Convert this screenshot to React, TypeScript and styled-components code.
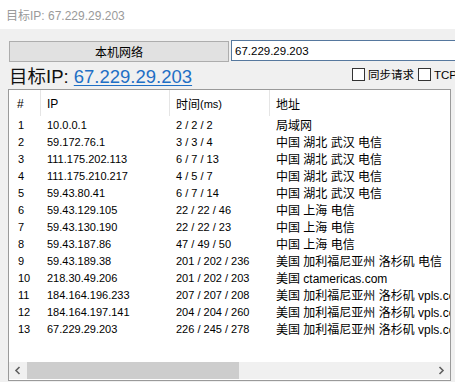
import React from 'react';
import styled, { createGlobalStyle } from 'styled-components';

const GlobalStyle = createGlobalStyle`
  html, body {
    margin: 0;
    padding: 0;
    width: 455px;
    height: 382px;
    overflow: hidden;
    background: #f0f0f0;
    font-family: "Liberation Sans", "Noto Sans CJK SC", sans-serif;
  }
`;

const Window = styled.div`
  width: 455px;
  height: 382px;
  display: flex;
  flex-direction: column;
  overflow: hidden;
`;

const TitleBar = styled.div`
  height: 29px;
  flex: 0 0 29px;
  background: #fff;
  display: flex;
  align-items: center;
  padding-left: 6px;
  padding-bottom: 1px;
  box-sizing: border-box;
  font-size: 12px;
  color: #9a9a9a;
  white-space: nowrap;
`;

const Body = styled.div`
  display: flex;
  flex-direction: column;
  padding: 11px 0 0 8px;
`;

const QueryRow = styled.div`
  display: flex;
  align-items: flex-start;
  height: 22px;
  margin-right: -20px;
`;

const LocalButton = styled.button`
  width: 220px;
  height: 21px;
  margin: 1px 0 0 1px;
  padding: 0;
  background: #e1e1e1;
  border: 1px solid #adadad;
  font-family: "Liberation Sans", "Noto Sans CJK SC", sans-serif;
  font-size: 12px;
  color: #000;
  display: flex;
  align-items: center;
  justify-content: center;
`;

const HostInput = styled.input`
  flex: 1;
  height: 21px;
  margin-left: 2px;
  box-sizing: border-box;
  border: 1px solid #56789e;
  background: #fff;
  padding: 0 3px;
  font-family: "Liberation Sans", sans-serif;
  font-size: 11.5px;
  color: #000;
  outline: none;
`;

const InfoRow = styled.div`
  display: flex;
  align-items: center;
  height: 27px;
  white-space: nowrap;
`;

const Heading = styled.div`
  flex: 0 0 343px;
  padding-left: 1px;
  font-size: 18.5px;
  color: #111;
  line-height: 22px;
  margin-top: 3px;
`;

const TargetLink = styled.a`
  color: #1f6fc5;
  text-decoration: underline;
  text-underline-offset: 2px;
  text-decoration-thickness: 1px;
`;

const Options = styled.div`
  display: flex;
  align-items: center;
  margin-top: -3px;
`;

const Option = styled.label`
  display: flex;
  align-items: center;
  gap: 3px;
  margin-right: 4px;
  font-size: 11.5px;
  color: #000;
`;

const Box = styled.span`
  width: 11px;
  height: 11px;
  border: 1px solid #333;
  background: #fff;
  display: inline-block;
`;

const Table = styled.div`
  width: 443px;
  height: 292px;
  box-sizing: border-box;
  border: 1px solid #9a9a9a;
  background: #fff;
  display: flex;
  flex-direction: column;
  overflow: hidden;
`;

const Grid = styled.div<{ $header?: boolean }>`
  display: grid;
  grid-template-columns: 31px 129px 100px 1fr;
  height: ${(p) => (p.$header ? '26px' : '17px')};
  flex: 0 0 auto;
  white-space: nowrap;
`;

const HeadCell = styled.div<{ $first?: boolean }>`
  display: flex;
  align-items: center;
  padding-left: ${(p) => (p.$first ? '8px' : '6px')};
  padding-top: 1px;
  border-left: ${(p) => (p.$first ? 'none' : '1px solid #e5e5e5')};
  font-size: 12px;
  color: #000;
`;

const Unit = styled.span`
  font-size: 11px;
`;

const Cell = styled.div<{ $first?: boolean; $zh?: boolean }>`
  display: flex;
  align-items: center;
  padding-left: ${(p) => (p.$first ? '9px' : '7px')};
  font-size: ${(p) => (p.$zh ? '12px' : '11px')};
  color: #000;
  overflow: hidden;
`;

const Spacer = styled.div`
  flex: 1;
`;

const HScroll = styled.div`
  height: 17px;
  flex: 0 0 17px;
  margin-bottom: 1px;
  background: #f0f0f0;
  display: flex;
  align-items: stretch;
`;

const ArrowButton = styled.div`
  width: 17px;
  display: flex;
  align-items: center;
  justify-content: center;
`;

const Track = styled.div`
  flex: 1;
  display: flex;
  padding: 0 1px;
`;

const Thumb = styled.div`
  background: #cdcdcd;
  height: 100%;
`;

const hops = [
  ['1', '10.0.0.1', '2 / 2 / 2', '局域网'],
  ['2', '59.172.76.1', '3 / 3 / 4', '中国 湖北 武汉 电信'],
  ['3', '111.175.202.113', '6 / 7 / 13', '中国 湖北 武汉 电信'],
  ['4', '111.175.210.217', '4 / 5 / 7', '中国 湖北 武汉 电信'],
  ['5', '59.43.80.41', '6 / 7 / 14', '中国 湖北 武汉 电信'],
  ['6', '59.43.129.105', '22 / 22 / 46', '中国 上海 电信'],
  ['7', '59.43.130.190', '22 / 22 / 23', '中国 上海 电信'],
  ['8', '59.43.187.86', '47 / 49 / 50', '中国 上海 电信'],
  ['9', '59.43.189.38', '201 / 202 / 236', '美国 加利福尼亚州 洛杉矶 电信'],
  ['10', '218.30.49.206', '201 / 202 / 203', '美国 ctamericas.com'],
  ['11', '184.164.196.233', '207 / 207 / 208', '美国 加利福尼亚州 洛杉矶 vpls.com'],
  ['12', '184.164.197.141', '204 / 204 / 260', '美国 加利福尼亚州 洛杉矶 vpls.com'],
  ['13', '67.229.29.203', '226 / 245 / 278', '美国 加利福尼亚州 洛杉矶 vpls.com'],
];

function Chevron({ dir }: { dir: 'left' | 'right' }) {
  return (
    <svg width="7" height="9" viewBox="0 0 7 9">
      <path
        d={dir === 'left' ? 'M5.5 1 L2 4.5 L5.5 8' : 'M1.5 1 L5 4.5 L1.5 8'}
        fill="none"
        stroke="#606060"
        strokeWidth="1.6"
      />
    </svg>
  );
}

export default function App() {
  const target = '67.229.29.203';

  return (
    <Window>
      <GlobalStyle />
      <TitleBar>目标IP: {target}</TitleBar>
      <Body>
        <QueryRow>
          <LocalButton>本机网络</LocalButton>
          <HostInput defaultValue={target} />
        </QueryRow>

        <InfoRow>
          <Heading>
            目标IP: <TargetLink href="#">{target}</TargetLink>
          </Heading>
          <Options>
            <Option>
              <Box />
              同步请求
            </Option>
            <Option>
              <Box />
              TCP模式
            </Option>
          </Options>
        </InfoRow>

        <Table>
          <Grid $header>
            <HeadCell $first>#</HeadCell>
            <HeadCell>IP</HeadCell>
            <HeadCell>
              时间<Unit>(ms)</Unit>
            </HeadCell>
            <HeadCell>地址</HeadCell>
          </Grid>
          {hops.map(([n, ip, time, addr]) => (
            <Grid key={n}>
              <Cell $first>{n}</Cell>
              <Cell>{ip}</Cell>
              <Cell>{time}</Cell>
              <Cell $zh>{addr}</Cell>
            </Grid>
          ))}
          <Spacer />
          <HScroll>
            <ArrowButton>
              <Chevron dir="left" />
            </ArrowButton>
            <Track>
              <Thumb style={{ width: '212px' }} />
            </Track>
            <ArrowButton>
              <Chevron dir="right" />
            </ArrowButton>
          </HScroll>
        </Table>
      </Body>
    </Window>
  );
}
